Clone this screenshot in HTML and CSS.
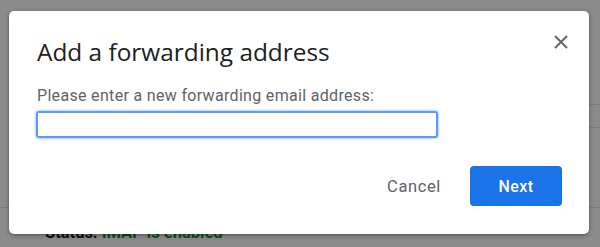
FILE: index.html
```html
<!DOCTYPE html>
<html>
<head>
<meta charset="utf-8">
<link rel="stylesheet" href="styles.css">
</head>
<body>
<div class="page">
  <div class="row row-a"></div>
  <div class="row row-b"></div>
  <div class="row row-c">
    <div class="status"><b>Status:</b> <span class="ok">IMAP is enabled</span></div>
  </div>
</div>
<div class="dialog">
  <div class="head">
    <h1 class="title">Add a forwarding address</h1>
    <button class="close" aria-label="Close">
      <svg width="14" height="14" viewBox="0 0 14 14"><path d="M1 1L13 13M13 1L1 13" stroke="#5f6368" stroke-width="1.8" fill="none"/></svg>
    </button>
  </div>
  <label class="label">Please enter a new forwarding email address:</label>
  <div class="field"></div>
  <div class="actions">
    <button class="btn cancel">Cancel</button>
    <button class="btn next">Next</button>
  </div>
</div>
</body>
</html>
```
FILE: styles.css
```css
html, body { margin: 0; padding: 0; }
body {
  width: 600px;
  height: 247px;
  overflow: hidden;
  background: #8b8b8b;
  position: relative;
  font-family: Roboto, "Liberation Sans", sans-serif;
}
.page { padding-top: 104px; }
.row { border-top: 1px solid #7c7c7c; }
.row-a { height: 22px; margin-left: 300px; }
.row-b { height: 79px; margin-left: 300px; }
.row-c { padding-top: 15px; padding-left: 45px; }
.status { font-size: 16.5px; line-height: 20px; color: #111; }
.status b { font-weight: 700; }
.status .ok { color: #0a4f1a; font-weight: 700; }

.dialog {
  position: absolute;
  left: 9px;
  top: 11px;
  width: 580px;
  height: 223px;
  box-sizing: border-box;
  background: #fff;
  border-radius: 5px;
  box-shadow: 0 1px 3px rgba(0,0,0,.3), 0 2px 6px rgba(0,0,0,.15);
  padding: 25px 27px 28px 28px;
  display: flex;
  flex-direction: column;
}
.head { display: flex; justify-content: space-between; align-items: flex-start; }
.title {
  margin: 0;
  font-family: "Open Sans", sans-serif;
  font-weight: 400;
  font-size: 24.4px;
  line-height: 32px;
  color: #202124;
}
.close {
  margin: -6px -11px 0 0;
  width: 24px; height: 24px;
  padding: 0; border: 0; background: none;
  display: flex; align-items: center; justify-content: center;
}
.label {
  margin-top: 18px;
  font-size: 16px;
  line-height: 20px;
  letter-spacing: .32px;
  color: #5f6368;
}
.field {
  margin-top: 5px;
  width: 402px;
  height: 27px;
  box-sizing: border-box;
  border: 2px solid #5d9af5;
  border-radius: 3px;
  box-shadow: 0 0 2px 1px rgba(93,154,245,.45);
  margin-left: -1px;
}
.actions {
  margin-top: auto;
  display: flex;
  justify-content: flex-end;
  gap: 10px;
}
.btn {
  width: 92px; height: 40px;
  border: 0; border-radius: 4px;
  font-family: Roboto, sans-serif;
  font-size: 16px;
  font-weight: 500;
  letter-spacing: .4px;
  padding: 0;
}
.cancel { background: transparent; color: #5f6368; font-weight: 400; font-size: 16.5px; letter-spacing: .6px; }
.next { background: #1a73e8; color: #fff; }
```
